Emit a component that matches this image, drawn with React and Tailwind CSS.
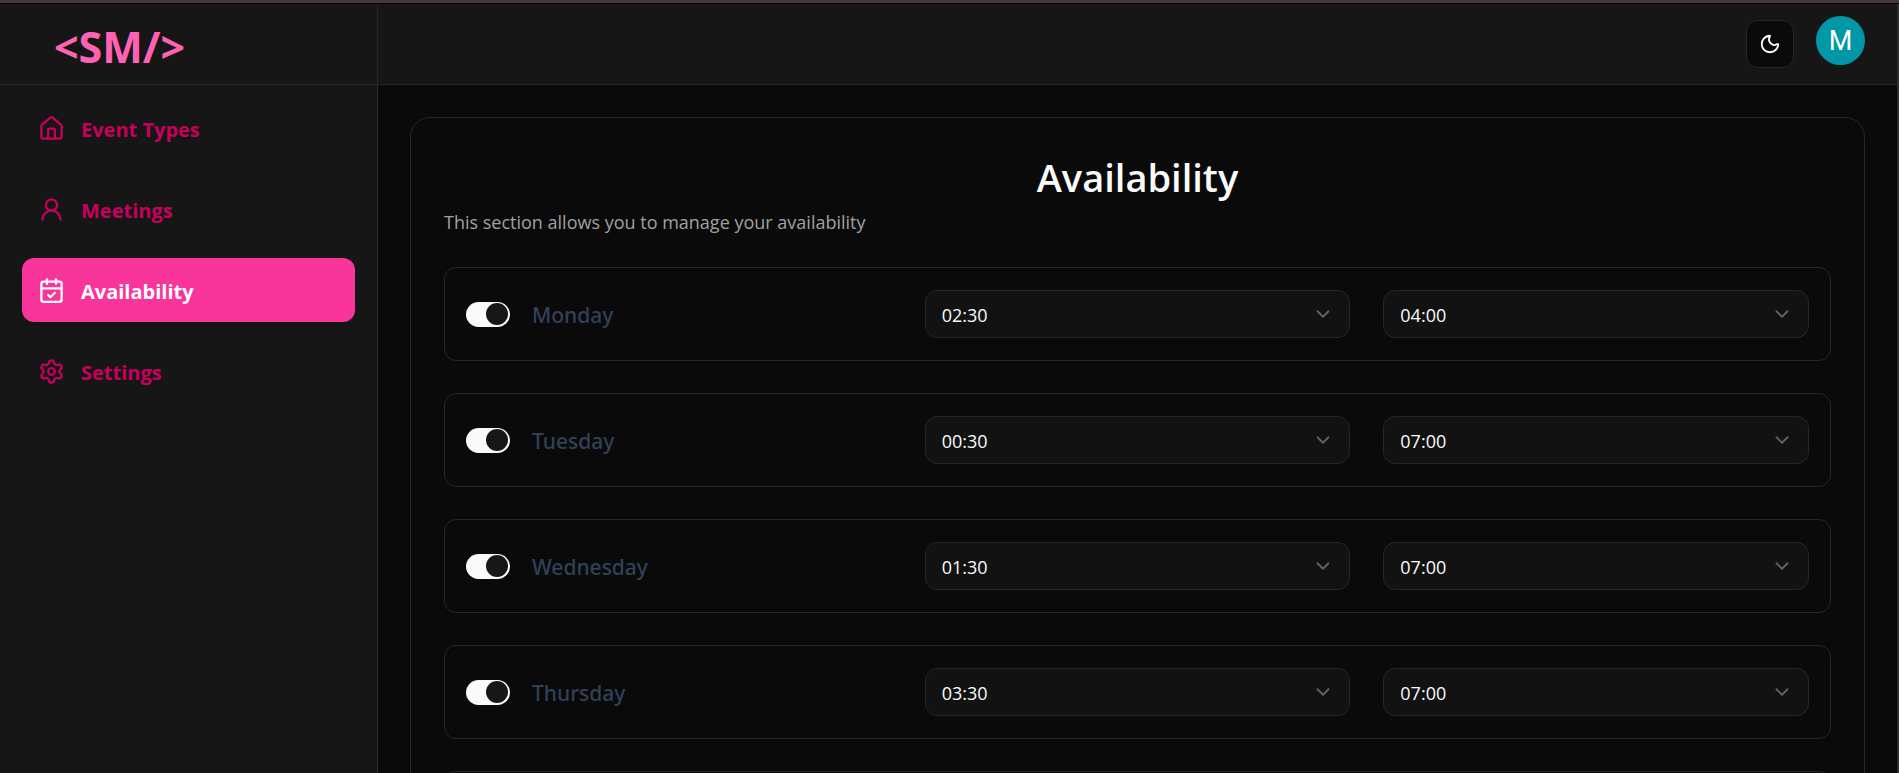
import { House, UserRound, CalendarCheck, Settings, Moon, ChevronDown } from "lucide-react";

const links = [
  { label: "Event Types", icon: House },
  { label: "Meetings", icon: UserRound },
  { label: "Availability", icon: CalendarCheck, active: true },
  { label: "Settings", icon: Settings },
];

const days = [
  { day: "Monday", from: "02:30", till: "04:00" },
  { day: "Tuesday", from: "00:30", till: "07:00" },
  { day: "Wednesday", from: "01:30", till: "07:00" },
  { day: "Thursday", from: "03:30", till: "07:00" },
  { day: "Friday", from: "03:30", till: "07:00" },
];

const times = Array.from({ length: 48 }, (_, i) =>
  `${String(Math.floor(i / 2)).padStart(2, "0")}:${i % 2 ? "30" : "00"}`
);

function NavLink({ label, icon: Icon, active }) {
  return (
    <a
      href="#"
      aria-current={active ? "page" : undefined}
      className={`flex h-16 items-center gap-4 rounded-xl px-4 text-xl font-bold ${
        active ? "bg-[#f9349b] text-white shadow-md" : "text-[#c6005c]"
      }`}
    >
      <Icon className="size-[27px]" strokeWidth={2} />
      <span className="pt-[3px]">{label}</span>
    </a>
  );
}

function TimeSelect({ label, value }) {
  return (
    <div className="relative">
      <select
        aria-label={label}
        defaultValue={value}
        className="h-12 w-full appearance-none rounded-xl border border-[#262626] bg-[#121212] px-4 pt-px text-lg text-[#fafafa]"
      >
        {times.map((t) => (
          <option key={t}>{t}</option>
        ))}
      </select>
      <ChevronDown className="pointer-events-none absolute right-4 top-[13px] size-[22px] text-[#636363]" />
    </div>
  );
}

function DayRow({ day, from, till }) {
  return (
    <div className="grid grid-cols-3 items-center gap-[33px] rounded-xl border border-[#262626] px-[21px] py-[22px]">
      <label className="relative flex items-center gap-[22px]">
        <input type="checkbox" role="switch" defaultChecked className="peer sr-only" />
        <span className="flex h-[25px] w-11 items-center justify-end rounded-full bg-[#fafafa] px-0.5">
          <span className="size-[22px] rounded-full bg-[#171717]" />
        </span>
        <span className="pt-0.5 font-['Noto_Sans','Open_Sans',sans-serif] text-[21px] leading-6 font-medium text-[#314158]">
          {day}
        </span>
      </label>
      <TimeSelect label={`${day} from`} value={from} />
      <TimeSelect label={`${day} till`} value={till} />
    </div>
  );
}

export default function App() {
  return (
    <div className="h-screen overflow-hidden border-t-3 border-[#463a36] bg-black pt-px font-['Open_Sans','Noto_Sans',sans-serif]">
      <div className="flex h-full border-r-2 border-[#2d2d2d] bg-[#0a0a0a]">
        <aside className="w-[378px] shrink-0 border-r border-[#262626] bg-[#161616]">
          <div className="flex h-[81px] items-center border-b border-[#262626] px-[54px] pt-1">
            <a href="#" className="text-[43px] leading-none font-bold text-[#ff62b4]">
              &lt;SM/&gt;
            </a>
          </div>
          <nav className="flex flex-col gap-[17px] px-[22px] py-[11px]">
            {links.map((l) => (
              <NavLink key={l.label} {...l} />
            ))}
          </nav>
        </aside>
        <div className="flex min-w-0 flex-1 flex-col">
          <header className="flex h-[81px] shrink-0 items-start justify-end gap-[22px] border-b border-[#262626] bg-[#161616] px-8 py-3">
            <button
              aria-label="Toggle theme"
              className="mt-1 grid size-12 place-items-center rounded-xl border border-[#262626] bg-[#0a0a0a] text-white"
            >
              <Moon className="size-[22px]" />
            </button>
            <button
              aria-label="Account"
              className="grid size-[49px] place-items-center rounded-full bg-[#0097a7] pt-0.5 font-[Roboto,sans-serif] text-[27px] leading-none font-normal text-white"
            >
              M
            </button>
          </header>
          <main className="p-8">
            <section className="rounded-[20px] border border-[#262626] px-[33px] py-8">
              <h1 className="text-center text-[38px] leading-[54px] font-semibold text-[#fafafa]">
                Availability
              </h1>
              <p className="mt-1 text-lg leading-7 text-[#a1a1a1]">
                This section allows you to manage your availability
              </p>
              <div className="mt-[31px] flex flex-col gap-8">
                {days.map((d) => (
                  <DayRow key={d.day} {...d} />
                ))}
              </div>
            </section>
          </main>
        </div>
      </div>
    </div>
  );
}
